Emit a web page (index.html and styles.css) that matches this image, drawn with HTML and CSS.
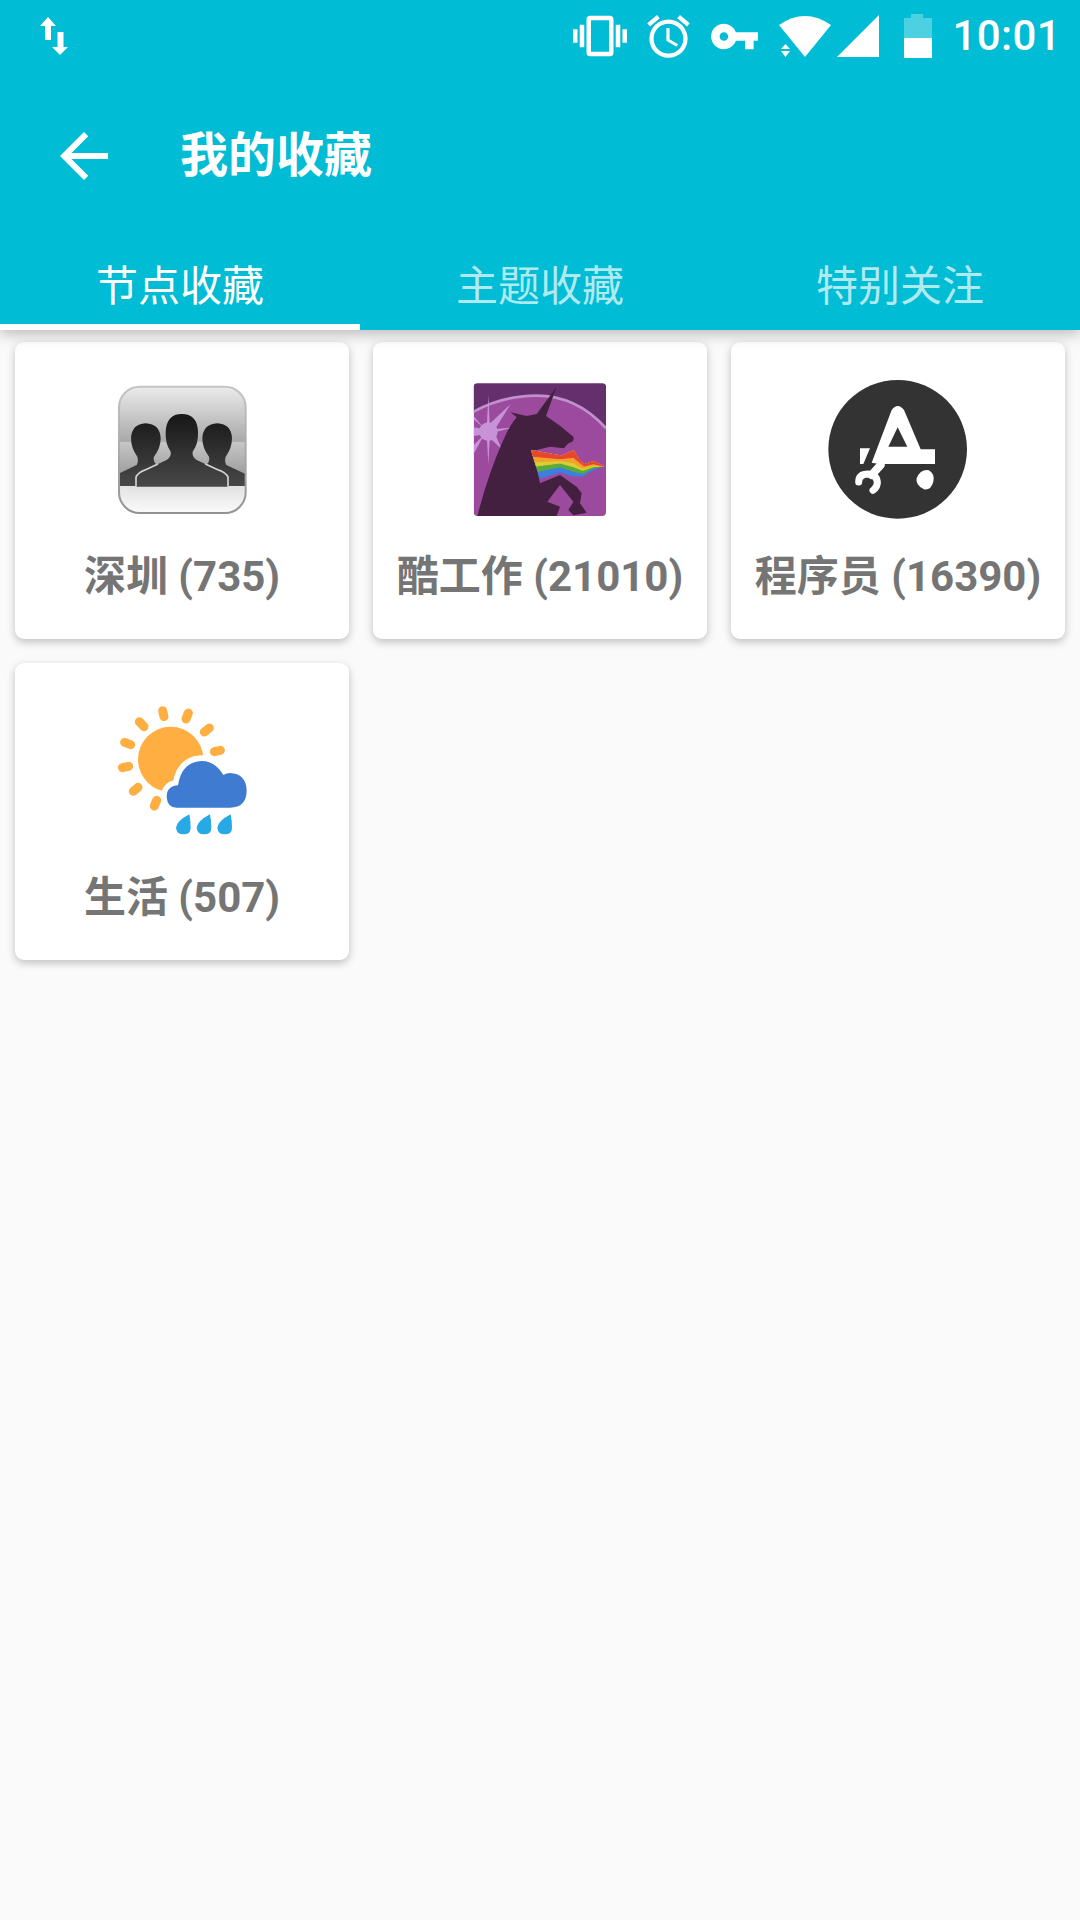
FILE: index.html
```html
<!DOCTYPE html>
<html lang="zh-CN">
<head>
<meta charset="utf-8">
<title>我的收藏</title>
<link rel="stylesheet" href="styles.css">
</head>
<body>
<div class="screen">
  <header class="appbar">
    <div class="statusbar">
      <svg class="st-data" viewBox="40 17 28 38"><path d="M48 17l8 9h-5v14h-6V26h-5zM60 55l-8-8h5.500V32h6v15H68z"/></svg>
      <div class="st-right">
        <svg class="st-vib" viewBox="0 0 24 24"><path d="M0 15h2V9H0v6zm3 2h2V7H3v10zm19-8v6h2V9h-2zm-3 8h2V7h-2v10zM16.500 3h-9C6.670 3 6 3.670 6 4.500v15c0 .83.67 1.500 1.500 1.500h9c.83 0 1.500-.67 1.500-1.500v-15c0-.83-.67-1.500-1.500-1.500zM16 19H8V5h8v14z"/></svg>
        <svg class="st-alarm" viewBox="0 0 24 24"><path d="M22 5.720l-4.600-3.860-1.290 1.530 4.600 3.860L22 5.720zM7.880 3.390L6.600 1.860 2 5.710l1.290 1.530 4.590-3.850zM12.500 8H11v6l4.750 2.850.75-1.230-4-2.370V8zM12 4c-4.970 0-9 4.030-9 9s4.030 9 9 9 9-4.030 9-9-4.030-9-9-9zm0 16c-3.870 0-7-3.130-7-7s3.130-7 7-7 7 3.130 7 7-3.130 7-7 7z"/></svg>
        <svg class="st-key" viewBox="0 0 24 24"><path d="M12.650 10C11.830 7.670 9.610 6 7 6c-3.310 0-6 2.690-6 6s2.690 6 6 6c2.610 0 4.830-1.670 5.650-4H17v4h4v-4h2v-4H12.650zM7 14c-1.100 0-2-.9-2-2s.9-2 2-2 2 .9 2 2-.9 2-2 2z"/></svg>
        <svg class="st-wifi" viewBox="778 9 56 54"><path d="M780 25Q806 7 832 25L806 57Z"/><path d="M786.500 44l4.500 5h-9zM782 51h9l-4.500 6z"/></svg>
        <svg class="st-signal" viewBox="838 15 42 42"><path d="M880 15V57H838Z"/></svg>
        <svg class="st-batt" viewBox="905 14 28 44"><path class="batt-empty" d="M912 14h12v4h9v20h-28V18h7z"/><path d="M905 38h28v20h-28z"/></svg>
        <span class="st-time">10:01</span>
      </div>
    </div>
    <div class="toolbar">
      <svg class="back" viewBox="0 0 24 24"><path d="M20 11H7.830l5.590-5.590L12 4l-8 8 8 8 1.410-1.410L7.830 13H20v-2z"/></svg>
      <h1 class="title">我的收藏</h1>
    </div>
    <nav class="tabs">
      <div class="tab tab-active">节点收藏</div>
      <div class="tab">主题收藏</div>
      <div class="tab">特别关注</div>
    </nav>
  </header>

  <main class="grid">
    <article class="card">
      <svg class="pic" viewBox="330 144 432 432">
        <defs>
          <linearGradient id="gTop" x1="0" y1="0" x2="0" y2="1"><stop offset="0" stop-color="#ececec"/><stop offset=".55" stop-color="#a9a9a9"/><stop offset=".56" stop-color="#c6c6c6"/><stop offset="1" stop-color="#8f8f8f"/></linearGradient>
          <linearGradient id="gBot" x1="0" y1="0" x2="0" y2="1"><stop offset="0" stop-color="#e2e2e2"/><stop offset="1" stop-color="#fbfbfb"/></linearGradient>
          <linearGradient id="gMan" gradientUnits="userSpaceOnUse" x1="0" y1="250" x2="0" y2="468"><stop offset="0" stop-color="#161616"/><stop offset="1" stop-color="#484848"/></linearGradient>
          <linearGradient id="gRim" x1="0" y1="0" x2="0" y2="1"><stop offset="0" stop-color="#c4c4c4"/><stop offset="1" stop-color="#929292"/></linearGradient>
          <clipPath id="gClip"><rect x="357" y="170" width="380" height="379" rx="62"/></clipPath>
        </defs>
        <g clip-path="url(#gClip)">
          <rect x="355" y="168" width="384" height="302" fill="url(#gTop)"/>
          <rect x="355" y="468" width="384" height="84" fill="url(#gBot)"/>
          <path fill="url(#gMan)" d="M350 434L410 405Q416 395 412 380Q393 355 393 325Q395 282 437 280Q480 282 482 325Q482 355 462 380Q458 395 470 405L520 440V468H350Z"/>
          <path fill="url(#gMan)" d="M740 434L679 405Q673 395 677 380Q696 355 696 325Q694 282 652 280Q609 282 607 325Q607 355 627 380Q631 395 619 405L569 440V468H740Z"/>
          <path fill="url(#gMan)" d="M408 470V442Q412 428 440 418L500 390Q515 380 512 365Q495 340 497 305Q500 252 545 252Q592 252 594 305Q596 340 578 365Q575 380 590 390L650 418Q680 428 684 442V470Z"/>
          <path fill="none" stroke="#d4d4d4" stroke-width="5" d="M408 470V442Q412 428 440 418L474 402M684 470V442Q680 428 650 418L616 402"/>
        </g>
        <rect x="357" y="170" width="380" height="379" rx="62" fill="none" stroke="url(#gRim)" stroke-width="6"/>
      </svg>
      <div class="label">深圳 (735)</div>
    </article>

    <article class="card">
      <svg class="pic" viewBox="324 144 432 432">
        <defs><clipPath id="uClip"><rect x="341" y="160" width="397" height="398" rx="12"/></clipPath></defs>
        <g clip-path="url(#uClip)">
          <rect x="341" y="160" width="397" height="398" fill="#9b4a9e"/>
          <path fill="#652f6e" d="M341 160H738V295Q650 195 530 195Q430 197 341 245Z"/>
          <path fill="none" stroke="#c18fcb" stroke-width="8" d="M341 245Q430 197 530 197Q650 197 738 295"/>
          <g fill="#c893d6">
            <circle cx="385" cy="305" r="28"/>
            <path d="M380 300L385 195L390 300ZM380 310L385 405L390 310ZM385 299L341 292L341 318L385 311ZM385 299L460 292L385 312ZM378 292L452 222L396 312ZM372 295L341 258L341 268ZM372 315L341 372L341 345ZM398 295L425 358L380 315Z"/>
          </g>
          <path fill="#43203f" d="M352 558Q385 430 430 330Q450 285 470 262L452 247L500 258L530 252L590 170L558 258Q600 285 640 320Q645 335 625 340L612 355L570 350L520 362L540 460L600 435L650 470L665 490L660 520L680 548L640 556L625 540L640 515L600 465L562 515L600 530L590 558Z"/>
          <g stroke-width="3" stroke-linejoin="round">
            <path fill="#3b7fe0" stroke="#3b7fe0" d="M515 362L570 372L605 378L640 362L655 385L672 404L700 395L730 408L700 420L668 438L640 438L600 426L540 445Z"/>
            <path fill="#5cab3a" stroke="#5cab3a" d="M515 362L570 372L605 378L640 362L655 385L672 404L700 395L730 408L700 414L668 430L640 424L600 410L534 424Z"/>
            <path fill="#d9cf34" stroke="#d9cf34" d="M515 362L570 372L605 378L640 362L655 385L672 404L700 395L730 408L700 410L668 421L640 410L600 399L529 408Z"/>
            <path fill="#f2a32b" stroke="#f2a32b" d="M515 362L570 372L605 378L640 362L655 385L672 404L700 395L730 408L700 406L668 415L640 398L600 392L525 395Z"/>
            <path fill="#e8452f" stroke="#e8452f" d="M515 362L570 372L605 378L640 362L655 385L672 404L700 395L730 408L700 401L672 408L640 382L600 386L520 379Z"/>
          </g>
        </g>
      </svg>
      <div class="label">酷工作 (21010)</div>
    </article>

    <article class="card">
      <svg class="pic" viewBox="318 144 432 432">
        <circle cx="533" cy="358" r="208" fill="#333"/>
        <path fill="#fff" fill-rule="evenodd" d="M515 240Q533 216 552 240L602 358H645V402H478L455 398ZM533 292L505 350H562Z"/>
        <path fill="#fff" d="M420 355H450L430 402H420Z"/>
        <path fill="none" stroke="#333" stroke-width="7" d="M470 340L436 412"/>
        <path fill="none" stroke="#fff" stroke-width="24" stroke-linecap="round" d="M455 435L482 405"/>
        <path fill="none" stroke="#fff" stroke-width="21" stroke-linecap="round" d="M416 456Q416 432 445 432Q472 434 472 460Q470 474 459 481"/>
        <path fill="#fff" d="M590 445Q600 418 625 420Q645 430 640 455Q632 482 612 478Q585 465 590 445Z"/>
      </svg>
      <div class="label">程序员 (16390)</div>
    </article>

    <article class="card">
      <svg class="pic" viewBox="330 144 432 432">
        <circle cx="512" cy="325" r="98" fill="#ffaf42"/>
        <path fill="#fff" stroke="#fff" stroke-width="34" stroke-linejoin="round" d="M530 470H690Q740 470 740 418Q738 368 690 366Q680 366 670 372Q645 330 605 330Q545 332 534 403Q500 405 500 438Q502 470 530 470Z"/>
        <g fill="none" stroke="#ffaf42" stroke-width="27" stroke-linecap="round">
          <path d="M488 179L492 197M565 186L558 204M628 231L613 243M418 212L432 227M374 274L392 281M367 350L386 346M400 421L414 409M470 448L463 465M643 302L661 298"/>
        </g>
        <path fill="#3f7bd0" d="M530 470H690Q740 470 740 418Q738 368 690 366Q680 366 670 372Q645 330 605 330Q545 332 534 403Q500 405 500 438Q502 470 530 470Z"/>
        <g fill="#26a9e4">
          <path d="M568 490Q530 510 528 530Q530 550 550 550Q572 550 572 530Q572 510 568 490Z"/>
          <path d="M630 490Q592 510 590 530Q592 550 612 550Q634 550 634 530Q634 510 630 490Z"/>
          <path d="M692 490Q654 510 652 530Q654 550 674 550Q696 550 696 530Q696 510 692 490Z"/>
        </g>
      </svg>
      <div class="label">生活 (507)</div>
    </article>
  </main>
</div>
</body>
</html>
```
FILE: styles.css
```css
* { box-sizing: border-box; }
html, body { margin: 0; padding: 0; }
body {
  width: 1080px;
  height: 1920px;
  overflow: hidden;
  background: #fafafa;
  font-family: Roboto, "Noto Sans CJK SC", sans-serif;
}
.screen { width: 1080px; height: 1920px; display: flex; flex-direction: column; }

.appbar {
  position: relative;
  z-index: 1;
  background: #00bcd4;
  color: #fff;
  box-shadow: 0 4px 14px rgba(0, 0, 0, .26);
}
.appbar svg { fill: #fff; display: block; flex: none; }

.statusbar {
  height: 72px;
  display: flex;
  align-items: center;
  justify-content: space-between;
  padding: 0 19px 0 40px;
}
.st-right { display: flex; align-items: center; }
.st-data { width: 28px; height: 38px; }
.st-vib { width: 54px; height: 54px; }
.st-alarm { width: 51px; height: 51px; margin-left: 16px; }
.st-key { width: 51px; height: 51px; margin-left: 15px; }
.st-wifi { width: 56px; height: 54px; margin-left: 17px; }
.st-signal { width: 42px; height: 42px; margin-left: 4px; }
.st-batt { width: 28px; height: 44px; margin-left: 25px; }
.appbar .batt-empty { fill: rgba(255, 255, 255, .3); }
.st-time { font-size: 42px; line-height: 48px; margin-left: 20px; font-weight: 500; letter-spacing: .4px; }

.toolbar {
  height: 168px;
  display: flex;
  align-items: center;
  padding-left: 48px;
}
.back { width: 72px; height: 72px; }
.title {
  margin: 0 0 0 60px;
  font-size: 48px;
  line-height: 64px;
  font-weight: 700;
}

.tabs { display: flex; height: 90px; }
.tab {
  flex: 1;
  display: flex;
  align-items: center;
  justify-content: center;
  padding-bottom: 6px;
  font-size: 42px;
  color: rgba(255, 255, 255, .7);
}
.tab-active { color: #fff; box-shadow: inset 0 -6px 0 #fff; }

.grid {
  display: grid;
  grid-template-columns: repeat(3, 334px);
  gap: 24px;
  padding: 12px 15px;
  align-content: start;
}
.card {
  background: #fff;
  border-radius: 9px;
  box-shadow: 0 3px 9px rgba(0, 0, 0, .24);
  height: 297px;
  padding-top: 36px;
  display: flex;
  flex-direction: column;
  align-items: center;
}
.pic { width: 144px; height: 144px; display: block; flex: none; filter: blur(.5px); }
.label {
  margin-top: 28px;
  font-size: 42px;
  line-height: 54px;
  font-weight: 700;
  color: #757575;
  white-space: nowrap;
}
```
